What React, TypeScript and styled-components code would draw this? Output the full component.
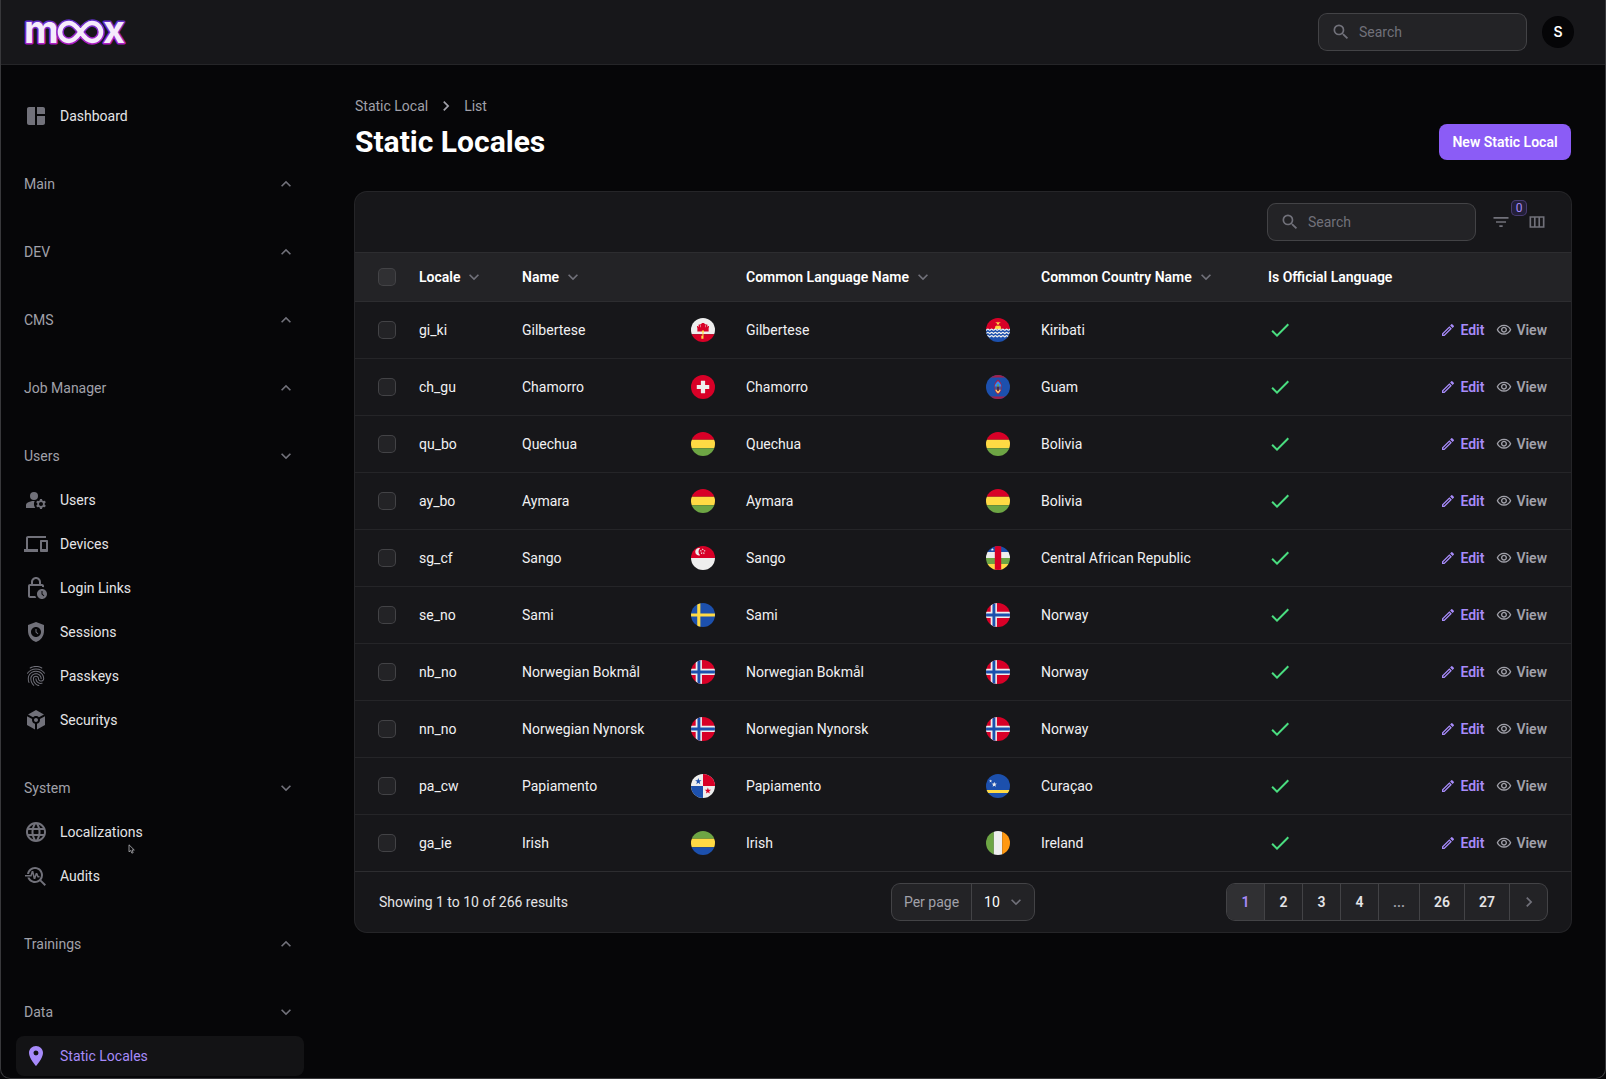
import React from "react";
import styled, { createGlobalStyle, css } from "styled-components";
import {
  MdSpaceDashboard,
  MdManageAccounts,
  MdDevices,
  MdOutlineLockClock,
  MdSafetyCheck,
  MdFingerprint,
  MdToken,
  MdLanguage,
  MdTroubleshoot,
  MdLocationOn,
  MdExpandLess,
  MdExpandMore,
  MdChevronRight,
  MdSearch,
  MdFilterList,
  MdOutlineViewColumn,
  MdCheck,
  MdOutlineModeEdit,
  MdOutlineVisibility,
} from "react-icons/md";
import type { IconType } from "react-icons";

const color = {
  page: "#060608",
  surface: "#17171a",
  raised: "#232326",
  line: "#2d2d30",
  ring: "#252528",
  field: "#434346",
  text: "#f1f1f3",
  muted: "#a1a1aa",
  dim: "#71717a",
  accent: "#8b5cf6",
  accentSoft: "#a78bfa",
  success: "#4ade80",
};

const GlobalStyle = createGlobalStyle`
  *, *::before, *::after { box-sizing: border-box; }
  body {
    margin: 0;
    background: ${color.page};
    color: ${color.text};
    font-family: Roboto, "Liberation Sans", sans-serif;
    font-size: 14px;
    line-height: 20px;
  }
  button, input, select { font: inherit; color: inherit; }
  a { color: inherit; text-decoration: none; }
  h1, p, ul, ol { margin: 0; padding: 0; }
  ul, ol { list-style: none; }
`;

const WindowFrame = styled.div`
  position: fixed;
  inset: 0;
  z-index: 20;
  pointer-events: none;
  border: 1px solid #38383b;
  border-top: 0;
  border-radius: 0 0 10px 10px;
`;

/* ---------- top bar ---------- */

const TopBar = styled.header`
  position: sticky;
  top: 0;
  z-index: 10;
  display: flex;
  align-items: center;
  justify-content: space-between;
  height: 64px;
  padding: 0 32px 0 24px;
  background: ${color.surface};
  box-shadow: 0 0 0 1px ${color.ring};
`;

const TopActions = styled.div`
  display: flex;
  align-items: center;
  gap: 16px;
`;

const LogoLink = styled.a`
  display: flex;
`;

const SearchBox = styled.label`
  display: flex;
  align-items: center;
  gap: 8px;
  width: 207px;
  height: 36px;
  padding: 0 12px;
  border-radius: 8px;
  background: ${color.raised};
  box-shadow: 0 0 0 1px ${color.field};
  color: ${color.dim};

  svg {
    flex: none;
  }
`;

const SearchInput = styled.input`
  flex: 1;
  min-width: 0;
  padding: 0;
  border: 0;
  outline: 0;
  background: transparent;
  color: ${color.text};

  &::placeholder {
    color: ${color.dim};
    opacity: 1;
  }
`;

const Avatar = styled.button`
  width: 32px;
  height: 32px;
  padding: 0;
  border: 0;
  border-radius: 50%;
  background: #050507;
  color: #fff;
  font-family: Inter, sans-serif;
  font-weight: 600;
`;

/* ---------- sidebar ---------- */

const Shell = styled.div`
  display: grid;
  grid-template-columns: 320px minmax(0, 1fr);
  align-items: start;
`;

const Sidebar = styled.nav`
  position: sticky;
  top: 64px;
  display: flex;
  flex-direction: column;
  gap: 28px;
  height: calc(100vh - 64px);
  padding: 32px 16px;
  overflow-y: auto;
  scrollbar-width: none;
`;

const NavGroup = styled.section`
  display: flex;
  flex-direction: column;
  gap: 4px;
`;

const NavGroupButton = styled.button`
  display: flex;
  flex: none;
  align-items: center;
  justify-content: space-between;
  height: 40px;
  padding: 0 8px;
  border: 0;
  background: transparent;
  color: ${color.muted};
  font-weight: 450;

  svg {
    color: ${color.dim};
  }
`;

const NavList = styled.ul`
  display: flex;
  flex-direction: column;
  gap: 4px;
`;

const NavItem = styled.li`
  position: relative;
`;

const NavLink = styled.a<{ $active?: boolean }>`
  display: flex;
  align-items: center;
  gap: 12px;
  height: 40px;
  padding: 0 8px;
  border-radius: 8px;
  color: #e4e4e7;
  font-weight: 450;

  svg {
    flex: none;
    color: ${color.dim};
  }

  ${(p) =>
    p.$active &&
    css`
      background: #131315;
      color: ${color.accentSoft};
      svg {
        color: ${color.accentSoft};
      }
    `}
`;

const Pointer = styled.svg`
  position: absolute;
  top: 32px;
  left: 112px;
`;

/* ---------- page ---------- */

const Page = styled.main`
  width: 100%;
  max-width: 1280px;
  margin: 0 auto;
  padding: 32px;
`;

const PageHeader = styled.div`
  display: flex;
  align-items: flex-end;
  justify-content: space-between;
  margin-bottom: 32px;
`;

const Crumbs = styled.ol`
  display: flex;
  align-items: center;
  gap: 8px;
  margin-bottom: 8px;
  color: ${color.muted};

  li {
    display: flex;
  }
`;

const Title = styled.h1`
  color: #fff;
  font-size: 30px;
  font-weight: 700;
  line-height: 36px;
`;

const PrimaryButton = styled.button`
  min-width: 132px;
  height: 36px;
  padding: 0 12px;
  border: 0;
  border-radius: 8px;
  background: ${color.accent};
  color: #fff;
  font-weight: 600;
`;

const Card = styled.section`
  overflow: hidden;
  border-radius: 12px;
  background: ${color.surface};
  box-shadow: 0 0 0 1px ${color.ring};
`;

const Toolbar = styled.div`
  display: flex;
  align-items: center;
  justify-content: flex-end;
  gap: 16px;
  height: 60px;
  padding: 0 24px;
`;

const IconButton = styled.button`
  position: relative;
  display: flex;
  padding: 0;
  border: 0;
  background: transparent;
  color: ${color.dim};
`;

const CountBadge = styled.span`
  position: absolute;
  top: -12px;
  left: 20px;
  width: 16px;
  height: 16px;
  border-radius: 5px;
  background: #231f38;
  box-shadow: inset 0 0 0 1px #473b70;
  color: ${color.accentSoft};
  font-size: 12px;
  line-height: 16px;
  text-align: center;
`;

const TableScroll = styled.div`
  overflow-x: auto;
`;

const Table = styled.table`
  width: 100%;
  min-width: 1200px;
  table-layout: fixed;
  border-collapse: separate;
  border-spacing: 0;
`;

const Col = styled.col<{ $width?: number }>`
  width: ${(p) => (p.$width ? `${p.$width}px` : "auto")};
`;

const HeadCell = styled.th`
  height: 50px;
  padding: 0 12px;
  border: 1px solid ${color.line};
  border-width: 1px 0;
  background: ${color.raised};
  color: #fff;
  font-weight: 600;
  text-align: left;
  white-space: nowrap;

  &:first-child {
    padding-left: 24px;
  }
`;

const SortButton = styled.button`
  display: flex;
  align-items: center;
  gap: 4px;
  padding: 0;
  border: 0;
  background: transparent;

  svg {
    color: ${color.dim};
  }
`;

const Cell = styled.td`
  height: 57px;
  padding: 0 12px;
  border-bottom: 1px solid ${color.ring};
  white-space: nowrap;

  &:first-child {
    padding-left: 24px;
  }
  &:last-child {
    padding-right: 24px;
  }
  tr:last-child > & {
    border-color: ${color.line};
  }
  > svg {
    display: block;
  }
`;

const Checkbox = styled.input<{ $head?: boolean }>`
  appearance: none;
  display: block;
  width: 16px;
  height: 16px;
  margin: 0;
  border-radius: 4px;
  background: ${(p) => (p.$head ? "#303033" : color.raised)};
  box-shadow: 0 0 0 1px ${color.field};

  &:checked {
    background: ${color.accent};
  }
`;

const RowActions = styled.div`
  display: flex;
  justify-content: flex-end;
  gap: 12px;
`;

const RowAction = styled.a<{ $accent?: boolean }>`
  display: flex;
  align-items: center;
  gap: 4px;
  color: ${(p) => (p.$accent ? color.accentSoft : color.muted)};
  font-weight: 600;
`;

const FlagSvg = styled.svg`
  display: block;
  width: 24px;
  height: 24px;
  border-radius: 50%;
`;

/* ---------- table footer ---------- */

const TableFooter = styled.div`
  display: grid;
  grid-template-columns: 1fr auto 1fr;
  align-items: center;
  height: 60px;
  padding: 0 24px;
`;

const Summary = styled.p`
  color: #e4e4e7;
`;

const PerPage = styled.label`
  display: flex;
  align-items: center;
  height: 36px;
  border-radius: 8px;
  background: ${color.raised};
  box-shadow: 0 0 0 1px ${color.field};
`;

const PerPageLabel = styled.span`
  padding: 8px 12px;
  border-right: 1px solid ${color.field};
  color: ${color.muted};
`;

const SelectWrap = styled.span`
  position: relative;
  display: flex;
  align-items: center;

  svg {
    position: absolute;
    right: 8px;
    color: ${color.dim};
    pointer-events: none;
  }
`;

const Select = styled.select`
  appearance: none;
  width: 62px;
  height: 36px;
  padding: 0 12px;
  border: 0;
  background: transparent;
  color: #fff;
`;

const Pagination = styled.ol`
  display: flex;
  justify-self: end;
  overflow: hidden;
  border-radius: 8px;
  background: ${color.raised};
  box-shadow: 0 0 0 1px ${color.field};

  li + li {
    border-left: 1px solid ${color.field};
  }
`;

const PageButton = styled.button<{ $current?: boolean; $muted?: boolean }>`
  display: flex;
  align-items: center;
  justify-content: center;
  min-width: 37px;
  height: 36px;
  padding: 0 14px;
  border: 0;
  background: ${(p) => (p.$current ? "#303033" : "transparent")};
  color: ${(p) => (p.$current ? color.accentSoft : p.$muted ? color.muted : "#e4e4e7")};
  font-weight: 600;

  svg {
    margin: 0 -6px;
    color: ${color.dim};
  }
`;

/* ---------- drawings ---------- */

const INFINITY_PATH =
  "M56.5 14C52 20.500 49 23 45 23A9 9 0 0 1 45 5C49 5 52 7.500 56.500 14C61 20.500 64 23 68 23A9 9 0 0 0 68 5C64 5 61 7.500 56.500 14Z";

function Logo() {
  const letter = {
    fontFamily: "Inter, sans-serif",
    fontSize: 38,
    fontWeight: 700,
    fill: "#f5ebfc",
    stroke: "url(#logo-glow)",
    strokeWidth: 3,
    paintOrder: "stroke" as const,
    strokeLinejoin: "round" as const,
  };
  return (
    <svg width="108" height="60" viewBox="0 -16 108 60" role="img" aria-label="moox">
      <defs>
        <linearGradient id="logo-glow" gradientUnits="userSpaceOnUse" x1="0" y1="2" x2="0" y2="27">
          <stop offset="0" stopColor="#6030c8" />
          <stop offset="1" stopColor="#b41cc4" />
        </linearGradient>
      </defs>
      <text x="0" y="25" {...letter}>m</text>
      <text x="79" y="25" {...letter}>x</text>
      <path d={INFINITY_PATH} fill="none" stroke="url(#logo-glow)" strokeWidth="7.600" />
      <path d={INFINITY_PATH} fill="none" stroke="#f5ebfc" strokeWidth="4.600" />
    </svg>
  );
}

const RED = "#d80027";
const BLUE = "#1c50ad";
const YELLOW = "#ffda44";
const GREEN = "#6da544";
const WHITE = "#eeeeee";

function starPath(cx: number, cy: number, r: number) {
  const points = Array.from({ length: 10 }, (_, i) => {
    const a = (Math.PI / 5) * i - Math.PI / 2;
    const q = i % 2 ? r * 0.4 : r;
    return `${(cx + Math.cos(a) * q).toFixed(1)} ${(cy + Math.sin(a) * q).toFixed(1)}`;
  });
  return `M${points.join("L")}Z`;
}

const wave = (y: number) =>
  `M-20 ${y}` + Array.from({ length: 7 }, () => "q20 26 40 0t40 0").join("");

const flags: Record<string, React.ReactNode> = {
  Gibraltar: (
    <>
      <path fill={WHITE} d="M0 0h512v345H0z" />
      <path fill={RED} d="M0 345h512v167H0zM136 290v-86h-8v-36h20v18h14v-46h34v-14h30v-22h60v22h30v14h34v46h14v-18h20v36h-8v86z" />
      <path fill={WHITE} d="M200 136h10v60h-10zM302 136h10v60h-10z" />
      <path fill={YELLOW} d="M232 266h46v40h-12v134h-46v-64h24v-70h-12z" />
    </>
  ),
  Switzerland: (
    <>
      <path fill={RED} d="M0 0h512v512H0z" />
      <path fill={WHITE} d="M389 211h-88v-89h-90v89h-88v90h88v89h90v-89h88z" />
    </>
  ),
  Bolivia: (
    <>
      <path fill={RED} d="M0 0h512v167H0z" />
      <path fill={YELLOW} d="M0 167h512v178H0z" />
      <path fill={GREEN} d="M0 345h512v167H0z" />
    </>
  ),
  Singapore: (
    <>
      <path fill={RED} d="M0 0h512v256H0z" />
      <path fill={WHITE} d="M0 256h512v256H0z" />
      <path fill={WHITE} d="M196 50a78 78 0 1 0 0 146a92 92 0 0 1 0-146z" />
      <path
        fill={WHITE}
        d={[[250, 72], [210, 104], [290, 104], [226, 154], [274, 154]].map(([x, y]) => starPath(x, y, 24)).join("")}
      />
    </>
  ),
  Sweden: (
    <>
      <path fill={BLUE} d="M0 0h512v512H0z" />
      <path fill={YELLOW} d="M133 0h67v512h-67zM0 222h512v67H0z" />
    </>
  ),
  Norway: (
    <>
      <path fill={RED} d="M0 0h512v512H0z" />
      <path fill={WHITE} d="M100 0h133v512H100zM0 189h512v133H0z" />
      <path fill={BLUE} d="M138 0h62v512h-62zM0 225h512v62H0z" />
    </>
  ),
  Panama: (
    <>
      <path fill={WHITE} d="M0 0h512v512H0z" />
      <path fill={RED} d="M256 0h256v256H256z" />
      <path fill={BLUE} d="M0 256h256v256H0z" />
      <path fill={BLUE} d={starPath(156, 158, 72)} />
      <path fill={RED} d={starPath(360, 358, 72)} />
    </>
  ),
  Gabon: (
    <>
      <path fill={GREEN} d="M0 0h512v167H0z" />
      <path fill={YELLOW} d="M0 167h512v178H0z" />
      <path fill={BLUE} d="M0 345h512v167H0z" />
    </>
  ),
  Kiribati: (
    <>
      <path fill={RED} d="M0 0h512v256H0z" />
      <path fill={BLUE} d="M0 236h512v276H0z" />
      <path fill={YELLOW} d="M180 236l16-28-6-26 28-4 10-22 28 14 28-14 10 22 28 4-6 26 16 28z" />
      <path fill={YELLOW} d="M196 84l50 10 10-18 10 18 50-10-34 30-6 22h-40l-6-22z" />
      <g fill="none" stroke={WHITE} strokeWidth="26">
        <path d={wave(248)} />
        <path d={wave(318)} />
        <path d={wave(388)} />
      </g>
    </>
  ),
  Guam: (
    <>
      <path fill={BLUE} d="M0 0h512v512H0z" />
      <path fill="#a2204a" d="M0 0h512v52H0zM0 460h512v52H0z" />
      <path fill="#a2204a" d="M256 92c110 90 110 238 0 328c-110-90-110-238 0-328z" />
      <path fill="#338af3" d="M256 130c60 50 70 90 70 120H186c0-30 10-70 70-120z" />
      <path fill="#3c5a9c" d="M186 250h140c0 26-4 46-10 66H196c-6-20-10-40-10-66z" />
      <path fill={GREEN} d="M238 196h36v54h-36z" />
      <path fill="#ffc168" d="M196 316h120c-10 30-30 56-60 80c-30-24-50-50-60-80z" />
      <path fill="#5b2333" d="M238 250h36v92h-36z" />
    </>
  ),
  "Central African Republic": (
    <>
      <path fill={BLUE} d="M0 0h512v128H0z" />
      <path fill={WHITE} d="M0 128h512v128H0z" />
      <path fill={GREEN} d="M0 256h512v128H0z" />
      <path fill={YELLOW} d="M0 384h512v128H0z" />
      <path fill={RED} d="M188 0h136v512H188z" />
      <path fill={WHITE} d={starPath(136, 76, 36)} />
    </>
  ),
  Curaçao: (
    <>
      <path fill={BLUE} d="M0 0h512v512H0z" />
      <path fill={YELLOW} d="M0 340h512v66H0z" />
      <path fill={WHITE} d={starPath(98, 152, 36) + starPath(176, 224, 60)} />
    </>
  ),
  Ireland: (
    <>
      <path fill={GREEN} d="M0 0h167v512H0z" />
      <path fill={WHITE} d="M167 0h178v512H167z" />
      <path fill="#ff9811" d="M345 0h167v512H345z" />
    </>
  ),
};

function Flag({ name }: { name: string }) {
  return (
    <FlagSvg viewBox="0 0 512 512" role="img" aria-label={name}>
      {flags[name]}
    </FlagSvg>
  );
}

/* ---------- data ---------- */

type Item = { label: string; icon: IconType; active?: boolean; hovered?: boolean };
type Group = { label: string; items?: Item[] };

const groups: Group[] = [
  { label: "Main" },
  { label: "DEV" },
  { label: "CMS" },
  { label: "Job Manager" },
  {
    label: "Users",
    items: [
      { label: "Users", icon: MdManageAccounts },
      { label: "Devices", icon: MdDevices },
      { label: "Login Links", icon: MdOutlineLockClock },
      { label: "Sessions", icon: MdSafetyCheck },
      { label: "Passkeys", icon: MdFingerprint },
      { label: "Securitys", icon: MdToken },
    ],
  },
  {
    label: "System",
    items: [
      { label: "Localizations", icon: MdLanguage, hovered: true },
      { label: "Audits", icon: MdTroubleshoot },
    ],
  },
  { label: "Trainings" },
  { label: "Data", items: [{ label: "Static Locales", icon: MdLocationOn, active: true }] },
];

const columnWidths = [52, 103, 169, 55, 240, 55, 227, 150, undefined];

const rows = [
  ["gi_ki", "Gilbertese", "Gibraltar", "Kiribati"],
  ["ch_gu", "Chamorro", "Switzerland", "Guam"],
  ["qu_bo", "Quechua", "Bolivia", "Bolivia"],
  ["ay_bo", "Aymara", "Bolivia", "Bolivia"],
  ["sg_cf", "Sango", "Singapore", "Central African Republic"],
  ["se_no", "Sami", "Sweden", "Norway"],
  ["nb_no", "Norwegian Bokmål", "Norway", "Norway"],
  ["nn_no", "Norwegian Nynorsk", "Norway", "Norway"],
  ["pa_cw", "Papiamento", "Panama", "Curaçao"],
  ["ga_ie", "Irish", "Gabon", "Ireland"],
];

const pages = ["1", "2", "3", "4", "...", "26", "27"];

/* ---------- components ---------- */

function SearchField({ label }: { label: string }) {
  return (
    <SearchBox>
      <MdSearch size={20} />
      <SearchInput type="search" placeholder="Search" aria-label={label} />
    </SearchBox>
  );
}

function SidebarItem({ item }: { item: Item }) {
  const Icon = item.icon;
  return (
    <NavItem>
      <NavLink href="#" $active={item.active} aria-current={item.active ? "page" : undefined}>
        <Icon size={24} />
        {item.label}
      </NavLink>
      {item.hovered && (
        <Pointer width="8" height="10" viewBox="0 0 8 10" aria-hidden="true">
          <path d="M1 .8v7l1.700-1.300 1.200 2.700 1.300-.6-1.200-2.600h2.300z" fill="#09090b" stroke="#b4b4b8" strokeWidth=".8" />
        </Pointer>
      )}
    </NavItem>
  );
}

function SortHead({ children }: { children: string }) {
  return (
    <HeadCell scope="col">
      <SortButton type="button">
        {children}
        <MdExpandMore size={20} />
      </SortButton>
    </HeadCell>
  );
}

export default function App() {
  return (
    <>
      <GlobalStyle />
      <TopBar>
        <LogoLink href="#">
          <Logo />
        </LogoLink>
        <TopActions>
          <SearchField label="Global search" />
          <Avatar type="button">S</Avatar>
        </TopActions>
      </TopBar>
      <Shell>
        <Sidebar>
          <NavList>
            <SidebarItem item={{ label: "Dashboard", icon: MdSpaceDashboard }} />
          </NavList>
          {groups.map((group) => (
            <NavGroup key={group.label}>
              <NavGroupButton type="button" aria-expanded={Boolean(group.items)}>
                {group.label}
                {group.items ? <MdExpandMore size={20} /> : <MdExpandLess size={20} />}
              </NavGroupButton>
              {group.items && (
                <NavList>
                  {group.items.map((item) => (
                    <SidebarItem key={item.label} item={item} />
                  ))}
                </NavList>
              )}
            </NavGroup>
          ))}
        </Sidebar>
        <Page>
          <PageHeader>
            <div>
              <Crumbs>
                <li><a href="#">Static Local</a></li>
                <li aria-hidden="true"><MdChevronRight size={20} /></li>
                <li><a href="#">List</a></li>
              </Crumbs>
              <Title>Static Locales</Title>
            </div>
            <PrimaryButton type="button">New Static Local</PrimaryButton>
          </PageHeader>
          <Card>
            <Toolbar>
              <SearchField label="Search locales" />
              <IconButton type="button" aria-label="Filter">
                <MdFilterList size={20} />
                <CountBadge>0</CountBadge>
              </IconButton>
              <IconButton type="button" aria-label="Toggle columns">
                <MdOutlineViewColumn size={20} />
              </IconButton>
            </Toolbar>
            <TableScroll>
              <Table>
                <colgroup>
                  {columnWidths.map((width, i) => (
                    <Col key={i} $width={width} />
                  ))}
                </colgroup>
                <thead>
                  <tr>
                    <HeadCell><Checkbox type="checkbox" $head aria-label="Select all" /></HeadCell>
                    <SortHead>Locale</SortHead>
                    <SortHead>Name</SortHead>
                    <HeadCell />
                    <SortHead>Common Language Name</SortHead>
                    <HeadCell />
                    <SortHead>Common Country Name</SortHead>
                    <HeadCell scope="col">Is Official Language</HeadCell>
                    <HeadCell />
                  </tr>
                </thead>
                <tbody>
                  {rows.map(([code, language, languageFlag, country]) => (
                    <tr key={code}>
                      <Cell><Checkbox type="checkbox" aria-label={`Select ${code}`} /></Cell>
                      <Cell>{code}</Cell>
                      <Cell>{language}</Cell>
                      <Cell><Flag name={languageFlag} /></Cell>
                      <Cell>{language}</Cell>
                      <Cell><Flag name={country} /></Cell>
                      <Cell>{country}</Cell>
                      <Cell><MdCheck size={24} color={color.success} /></Cell>
                      <Cell>
                        <RowActions>
                          <RowAction href="#" $accent><MdOutlineModeEdit size={16} />Edit</RowAction>
                          <RowAction href="#"><MdOutlineVisibility size={16} />View</RowAction>
                        </RowActions>
                      </Cell>
                    </tr>
                  ))}
                </tbody>
              </Table>
            </TableScroll>
            <TableFooter>
              <Summary>Showing 1 to 10 of 266 results</Summary>
              <PerPage>
                <PerPageLabel>Per page</PerPageLabel>
                <SelectWrap>
                  <Select defaultValue="10">
                    <option>10</option>
                    <option>25</option>
                    <option>50</option>
                  </Select>
                  <MdExpandMore size={20} />
                </SelectWrap>
              </PerPage>
              <Pagination>
                {pages.map((page) => (
                  <li key={page}>
                    <PageButton type="button" $current={page === "1"} $muted={page === "..."} disabled={page === "..."}>
                      {page}
                    </PageButton>
                  </li>
                ))}
                <li>
                  <PageButton type="button" aria-label="Next page"><MdChevronRight size={20} /></PageButton>
                </li>
              </Pagination>
            </TableFooter>
          </Card>
        </Page>
      </Shell>
      <WindowFrame />
    </>
  );
}
